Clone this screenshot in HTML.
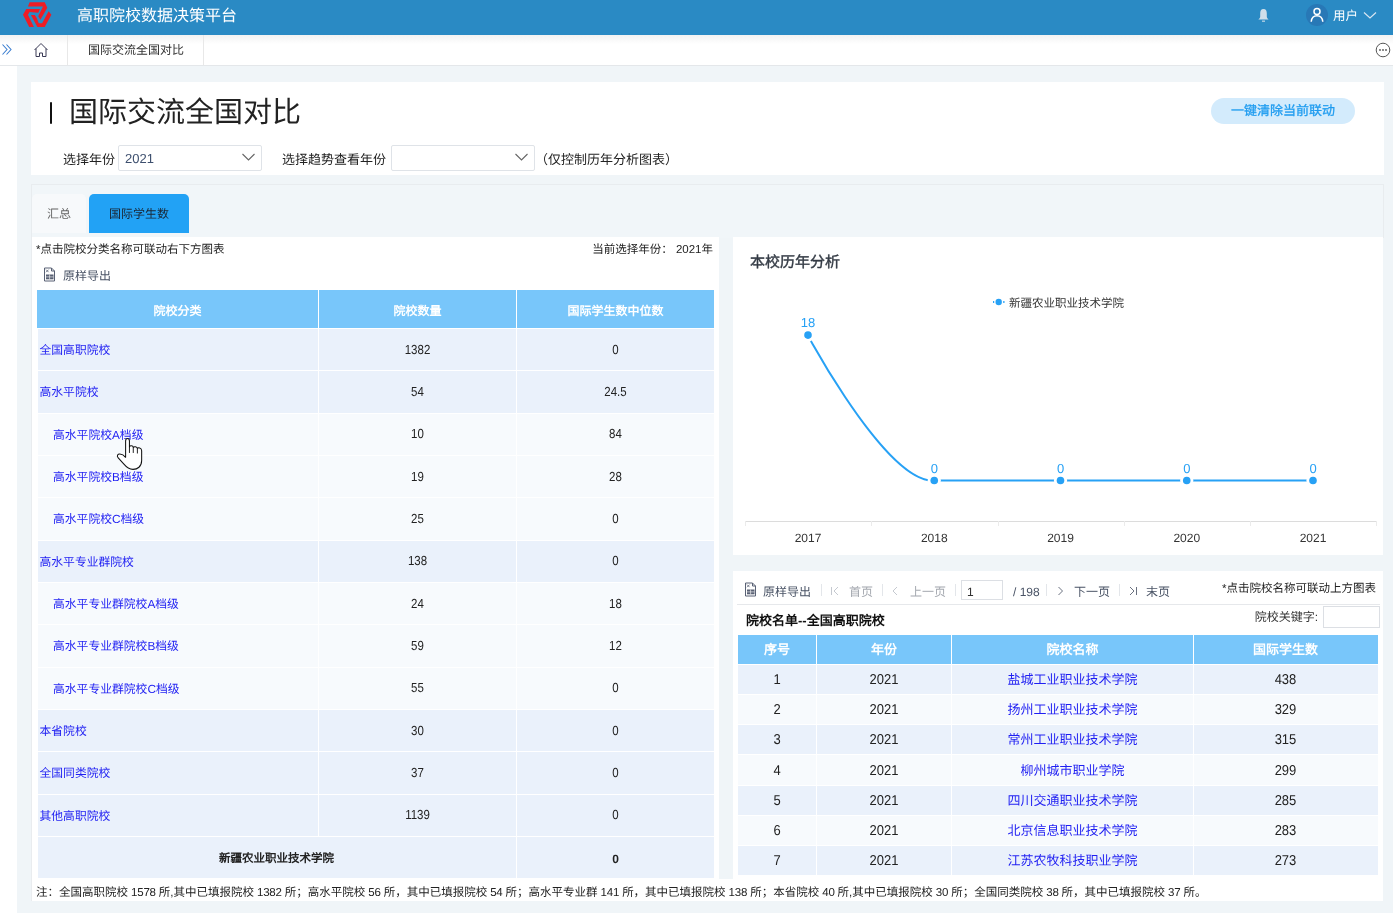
<!DOCTYPE html>
<html lang="zh-CN"><head><meta charset="utf-8">
<style>
*{box-sizing:border-box;margin:0;padding:0}
html,body{width:1393px;height:913px;overflow:hidden;background:#fff;font-family:"Liberation Sans",sans-serif;color:#222;text-rendering:geometricPrecision}
.abs{position:absolute}
.hdr{left:0;top:0;width:1393px;height:35px;background:#2a8ac4}
.ttl{left:77px;top:7px;font-size:16px;line-height:20px;color:#fff;white-space:nowrap}
.tabbar{left:0;top:35px;width:1393px;height:31px;background:#fff;border-bottom:1px solid #e4e7ea}
.shadow{left:0;top:35px;width:1393px;height:9px;background:linear-gradient(#f2f2f2,#fff)}
.sep{top:35px;width:1px;height:30px;background:#e8e8e8}
.bg{left:17px;top:66px;width:1376px;height:847px;background:#f0f5f8}
.panel{background:#fff}
.t{white-space:nowrap;line-height:1}
table{border-collapse:collapse;table-layout:fixed}
#root{position:absolute;left:0;top:0;width:1393px;height:913px;background:#fff;overflow:hidden;will-change:transform}
</style></head><body><div id="root">
<!-- header -->
<div class="abs hdr"></div>
<svg class="abs" style="left:15px;top:0" width="60" height="35" viewBox="0 0 1393 813">
<g fill="#ee1c25">
<polygon points="300,150 340,50 690,50 750,180 590,460 540,380 650,150"/>
<polygon points="580,210 260,210 185,345 330,630 440,630 300,345 340,280 540,295"/>
<polygon points="370,350 460,350 510,430 550,540 630,540 780,260 845,340 690,630 520,630"/>
</g></svg>
<div class="abs ttl">高职院校数据决策平台</div>
<!-- bell -->
<svg class="abs" style="left:1256px;top:7px" width="15" height="16" viewBox="0 0 15 16">
<path d="M7.5 2 C5 2 4.2 4 4.2 6.5 L4.2 9.5 C4.2 11 3.2 11.8 2.3 12.6 L12.7 12.6 C11.8 11.8 10.8 11 10.8 9.5 L10.8 6.5 C10.8 4 10 2 7.5 2Z" fill="#cfdeea"/>
<rect x="6" y="13.6" width="3" height="1.1" fill="#cfdeea"/>
</svg>
<div class="abs" style="left:1306px;top:4px;width:22px;height:22px;border-radius:50%;background:#2878b6"></div>
<svg class="abs" style="left:1306px;top:4px" width="22" height="22" viewBox="0 0 22 22">
<circle cx="11" cy="7.6" r="3" fill="none" stroke="#fff" stroke-width="1.5"/>
<path d="M5.2 17.8 C5.6 13.5 8 11.8 11 11.8 C14 11.8 16.4 13.5 16.8 17.8" fill="none" stroke="#fff" stroke-width="1.5"/>
</svg>
<div class="abs t" style="left:1333px;top:10px;font-size:12.5px;color:#fff">用户</div>
<svg class="abs" style="left:1363px;top:10px" width="14" height="10" viewBox="0 0 14 10">
<path d="M1 2.5 L7 8 L13 2.5" fill="none" stroke="#d8e6f2" stroke-width="1.2"/>
</svg>

<!-- tab bar -->
<div class="abs tabbar"></div>
<div class="abs shadow"></div>
<div class="abs sep" style="left:67px"></div>
<div class="abs sep" style="left:203px"></div>
<svg class="abs" style="left:1px;top:43px" width="13" height="13" viewBox="0 0 13 13">
<path d="M1.5 1.5 L6 6.5 L1.5 11.5 M5.5 1.5 L10 6.5 L5.5 11.5" fill="none" stroke="#3d7fd0" stroke-width="1.1"/>
</svg>
<svg class="abs" style="left:33px;top:42px" width="16" height="16" viewBox="0 0 16 16">
<path d="M1.5 8 L8 1.5 L14.5 8 M3 6.5 L3 14.5 L6.5 14.5 L6.5 11 L9.5 11 L9.5 14.5 L13 14.5 L13 6.5" fill="none" stroke="#3a3a55" stroke-width="1"/>
</svg>
<div class="abs t" style="left:88px;top:44px;font-size:12px;color:#333">国际交流全国对比</div>
<svg class="abs" style="left:1375px;top:42px" width="16" height="16" viewBox="0 0 16 16">
<circle cx="8" cy="8" r="6.8" fill="none" stroke="#555" stroke-width="1"/>
<circle cx="5" cy="8" r="0.9" fill="#555"/><circle cx="8" cy="8" r="0.9" fill="#555"/><circle cx="11" cy="8" r="0.9" fill="#555"/>
</svg>

<!-- content bg -->
<div class="abs bg"></div>

<!-- title panel -->
<div class="abs panel" style="left:31px;top:82px;width:1353px;height:93px"></div>
<div class="abs" style="left:49.8px;top:102.3px;width:2.4px;height:21.5px;border-radius:1.2px;background:#111"></div>
<div class="abs t" style="left:69px;top:99px;font-size:29px;color:#222">国际交流全国对比</div>
<div class="abs" style="left:1211px;top:98px;width:144px;height:26px;border-radius:13px;background:#d3ebfc"></div>
<div class="abs t" style="left:1211px;top:104px;width:144px;text-align:center;font-size:13px;color:#1f9cf0;-webkit-text-stroke:0.3px #1f9cf0">一键清除当前联动</div>

<div class="abs t" style="left:63px;top:153px;font-size:13px;color:#222">选择年份</div>
<div class="abs" style="left:118px;top:145px;width:144px;height:26px;border:1px solid #dfe3e8;border-radius:2px;background:#fff"></div>
<div class="abs t" style="left:125px;top:152px;font-size:13px;color:#3d4f6e">2021</div>
<svg class="abs" style="left:241px;top:152px" width="15" height="10" viewBox="0 0 15 10"><path d="M1.5 2 L7.5 8 L13.5 2" fill="none" stroke="#666" stroke-width="1.1"/></svg>
<div class="abs t" style="left:282px;top:153px;font-size:13px;color:#222">选择趋势查看年份</div>
<div class="abs" style="left:391px;top:145px;width:144px;height:26px;border:1px solid #dfe3e8;border-radius:2px;background:#fff"></div>
<svg class="abs" style="left:514px;top:152px" width="15" height="10" viewBox="0 0 15 10"><path d="M1.5 2 L7.5 8 L13.5 2" fill="none" stroke="#666" stroke-width="1.1"/></svg>
<div class="abs t" style="left:535px;top:153px;font-size:13px;color:#222">（仅控制历年分析图表）</div>

<!-- tabs -->
<div class="abs" style="left:31px;top:184px;width:1353px;height:54px;border:1px solid #e8ecef;border-bottom:none;background:#f1f6f9"></div>
<div class="abs" style="left:32px;top:194px;width:54px;height:39px;border-radius:5px 5px 0 0;background:#f7f9fb"></div>
<div class="abs t" style="left:32px;top:208px;width:54px;text-align:center;font-size:12px;color:#666">汇总</div>
<div class="abs" style="left:89px;top:194px;width:100px;height:39px;border-radius:5px 5px 0 0;background:#22a2f5"></div>
<div class="abs t" style="left:89px;top:208px;width:100px;text-align:center;font-size:12px;color:#1a2633">国际学生数</div>

<!-- left panel -->
<div class="abs panel" style="left:31px;top:237px;width:688px;height:642px;border-left:1px solid #e9ecef"></div>
<!-- right panels -->
<div class="abs panel" style="left:733px;top:237px;width:650px;height:318px"></div>
<div class="abs panel" style="left:733px;top:571px;width:650px;height:308px"></div>
<!-- note strip -->
<div class="abs panel" style="left:31px;top:879px;width:1352px;height:22px;border-left:1px solid #e9ecef"></div>

<!--LEFT-->
<div class="abs t" style="left:36px;top:244.5px;font-size:11.5px;color:#222">*点击院校分类名称可联动右下方图表</div>
<div class="abs t" style="left:520px;top:245px;width:193px;text-align:right;font-size:11.5px;color:#222">当前选择年份：&nbsp;2021年</div>
<svg class="abs" style="left:43px;top:267px" width="13" height="15" viewBox="0 0 13 15">
<path d="M1.5 1 L8.5 1 L11.5 4 L11.5 14 L1.5 14 Z" fill="#fff" stroke="#596174" stroke-width="1"/>
<path d="M8.5 1 L8.5 4 L11.5 4" fill="none" stroke="#596174" stroke-width="1"/>
<path d="M3 2.6 L5.6 5.2 M5.6 2.6 L3 5.2" stroke="#596174" stroke-width="0.8"/>
<rect x="3" y="7.5" width="7.5" height="4.8" fill="#596174"/>
<path d="M3 9.9 H10.5 M6.6 7.5 V12.3" stroke="#fff" stroke-width="0.6"/>
</svg>
<div class="abs t" style="left:63px;top:270px;font-size:12px;color:#4a5466">原样导出</div>
<div class="abs" style="left:37px;top:290px;width:677px;height:38px;background:#78c6fa"></div>
<div class="abs t" style="left:37px;top:304.5px;width:281px;text-align:center;font-size:12px;font-weight:bold;color:#fff">院校分类</div>
<div class="abs t" style="left:319px;top:304.5px;width:197px;text-align:center;font-size:12px;font-weight:bold;color:#fff">院校数量</div>
<div class="abs t" style="left:517px;top:304.5px;width:197px;text-align:center;font-size:12px;font-weight:bold;color:#fff">国际学生数中位数</div>
<div class="abs" style="left:38px;top:329.00px;width:676px;height:41.33px;background:#eaf1fb"></div>
<div class="abs t" style="left:39.5px;top:344.87px;font-size:11.8px;color:#1f1ff2">全国高职院校</div>
<div class="abs t" style="left:319px;top:345.67px;width:197px;text-align:center;font-size:11.5px;color:#222;transform:scaleY(1.14);transform-origin:50% 90%">1382</div>
<div class="abs t" style="left:517px;top:345.67px;width:197px;text-align:center;font-size:11.5px;color:#222;transform:scaleY(1.14);transform-origin:50% 90%">0</div>
<div class="abs" style="left:38px;top:371.33px;width:676px;height:41.33px;background:#eaf1fb"></div>
<div class="abs t" style="left:39.5px;top:387.20px;font-size:11.8px;color:#1f1ff2">高水平院校</div>
<div class="abs t" style="left:319px;top:388.00px;width:197px;text-align:center;font-size:11.5px;color:#222;transform:scaleY(1.14);transform-origin:50% 90%">54</div>
<div class="abs t" style="left:517px;top:388.00px;width:197px;text-align:center;font-size:11.5px;color:#222;transform:scaleY(1.14);transform-origin:50% 90%">24.5</div>
<div class="abs" style="left:38px;top:413.67px;width:676px;height:41.33px;background:#f7fafd"></div>
<div class="abs t" style="left:53px;top:429.53px;font-size:11.8px;color:#1f1ff2">高水平院校A档级</div>
<div class="abs t" style="left:319px;top:430.33px;width:197px;text-align:center;font-size:11.5px;color:#222;transform:scaleY(1.14);transform-origin:50% 90%">10</div>
<div class="abs t" style="left:517px;top:430.33px;width:197px;text-align:center;font-size:11.5px;color:#222;transform:scaleY(1.14);transform-origin:50% 90%">84</div>
<div class="abs" style="left:38px;top:456.00px;width:676px;height:41.33px;background:#f7fafd"></div>
<div class="abs t" style="left:53px;top:471.87px;font-size:11.8px;color:#1f1ff2">高水平院校B档级</div>
<div class="abs t" style="left:319px;top:472.67px;width:197px;text-align:center;font-size:11.5px;color:#222;transform:scaleY(1.14);transform-origin:50% 90%">19</div>
<div class="abs t" style="left:517px;top:472.67px;width:197px;text-align:center;font-size:11.5px;color:#222;transform:scaleY(1.14);transform-origin:50% 90%">28</div>
<div class="abs" style="left:38px;top:498.33px;width:676px;height:41.33px;background:#f7fafd"></div>
<div class="abs t" style="left:53px;top:514.20px;font-size:11.8px;color:#1f1ff2">高水平院校C档级</div>
<div class="abs t" style="left:319px;top:515.00px;width:197px;text-align:center;font-size:11.5px;color:#222;transform:scaleY(1.14);transform-origin:50% 90%">25</div>
<div class="abs t" style="left:517px;top:515.00px;width:197px;text-align:center;font-size:11.5px;color:#222;transform:scaleY(1.14);transform-origin:50% 90%">0</div>
<div class="abs" style="left:38px;top:540.67px;width:676px;height:41.33px;background:#eaf1fb"></div>
<div class="abs t" style="left:39.5px;top:556.53px;font-size:11.8px;color:#1f1ff2">高水平专业群院校</div>
<div class="abs t" style="left:319px;top:557.33px;width:197px;text-align:center;font-size:11.5px;color:#222;transform:scaleY(1.14);transform-origin:50% 90%">138</div>
<div class="abs t" style="left:517px;top:557.33px;width:197px;text-align:center;font-size:11.5px;color:#222;transform:scaleY(1.14);transform-origin:50% 90%">0</div>
<div class="abs" style="left:38px;top:583.00px;width:676px;height:41.33px;background:#f7fafd"></div>
<div class="abs t" style="left:53px;top:598.87px;font-size:11.8px;color:#1f1ff2">高水平专业群院校A档级</div>
<div class="abs t" style="left:319px;top:599.67px;width:197px;text-align:center;font-size:11.5px;color:#222;transform:scaleY(1.14);transform-origin:50% 90%">24</div>
<div class="abs t" style="left:517px;top:599.67px;width:197px;text-align:center;font-size:11.5px;color:#222;transform:scaleY(1.14);transform-origin:50% 90%">18</div>
<div class="abs" style="left:38px;top:625.33px;width:676px;height:41.33px;background:#f7fafd"></div>
<div class="abs t" style="left:53px;top:641.20px;font-size:11.8px;color:#1f1ff2">高水平专业群院校B档级</div>
<div class="abs t" style="left:319px;top:642.00px;width:197px;text-align:center;font-size:11.5px;color:#222;transform:scaleY(1.14);transform-origin:50% 90%">59</div>
<div class="abs t" style="left:517px;top:642.00px;width:197px;text-align:center;font-size:11.5px;color:#222;transform:scaleY(1.14);transform-origin:50% 90%">12</div>
<div class="abs" style="left:38px;top:667.67px;width:676px;height:41.33px;background:#f7fafd"></div>
<div class="abs t" style="left:53px;top:683.53px;font-size:11.8px;color:#1f1ff2">高水平专业群院校C档级</div>
<div class="abs t" style="left:319px;top:684.33px;width:197px;text-align:center;font-size:11.5px;color:#222;transform:scaleY(1.14);transform-origin:50% 90%">55</div>
<div class="abs t" style="left:517px;top:684.33px;width:197px;text-align:center;font-size:11.5px;color:#222;transform:scaleY(1.14);transform-origin:50% 90%">0</div>
<div class="abs" style="left:38px;top:710.00px;width:676px;height:41.33px;background:#eaf1fb"></div>
<div class="abs t" style="left:39.5px;top:725.87px;font-size:11.8px;color:#1f1ff2">本省院校</div>
<div class="abs t" style="left:319px;top:726.67px;width:197px;text-align:center;font-size:11.5px;color:#222;transform:scaleY(1.14);transform-origin:50% 90%">30</div>
<div class="abs t" style="left:517px;top:726.67px;width:197px;text-align:center;font-size:11.5px;color:#222;transform:scaleY(1.14);transform-origin:50% 90%">0</div>
<div class="abs" style="left:38px;top:752.33px;width:676px;height:41.33px;background:#eaf1fb"></div>
<div class="abs t" style="left:39.5px;top:768.20px;font-size:11.8px;color:#1f1ff2">全国同类院校</div>
<div class="abs t" style="left:319px;top:769.00px;width:197px;text-align:center;font-size:11.5px;color:#222;transform:scaleY(1.14);transform-origin:50% 90%">37</div>
<div class="abs t" style="left:517px;top:769.00px;width:197px;text-align:center;font-size:11.5px;color:#222;transform:scaleY(1.14);transform-origin:50% 90%">0</div>
<div class="abs" style="left:38px;top:794.67px;width:676px;height:41.33px;background:#eaf1fb"></div>
<div class="abs t" style="left:39.5px;top:810.53px;font-size:11.8px;color:#1f1ff2">其他高职院校</div>
<div class="abs t" style="left:319px;top:811.33px;width:197px;text-align:center;font-size:11.5px;color:#222;transform:scaleY(1.14);transform-origin:50% 90%">1139</div>
<div class="abs t" style="left:517px;top:811.33px;width:197px;text-align:center;font-size:11.5px;color:#222;transform:scaleY(1.14);transform-origin:50% 90%">0</div>
<div class="abs" style="left:38px;top:837.00px;width:676px;height:41.33px;background:#eaf1fb"></div>
<div class="abs" style="left:516px;top:837.00px;width:1px;height:41.33px;background:#fff"></div>
<div class="abs t" style="left:37px;top:853.67px;width:479px;text-align:center;font-size:11.5px;font-weight:bold;color:#222">新疆农业职业技术学院</div>
<div class="abs t" style="left:517px;top:852.67px;width:197px;text-align:center;font-size:12px;font-weight:bold;color:#222">0</div>
<div class="abs" style="left:318px;top:290px;width:1px;height:546px;background:#fff"></div>
<div class="abs" style="left:516px;top:290px;width:1px;height:588px;background:#fff"></div>
<!--CHART-->
<svg class="abs" style="left:733px;top:237px" width="650" height="318" viewBox="733 237 650 318">
<line x1="745" y1="521.5" x2="1376" y2="521.5" stroke="#dcdcdc" stroke-width="1"/>
<line x1="745.5" y1="521" x2="745.5" y2="526" stroke="#ebebeb" stroke-width="1"/>
<line x1="871.5" y1="521" x2="871.5" y2="526" stroke="#ebebeb" stroke-width="1"/>
<line x1="998.5" y1="521" x2="998.5" y2="526" stroke="#ebebeb" stroke-width="1"/>
<line x1="1124.5" y1="521" x2="1124.5" y2="526" stroke="#ebebeb" stroke-width="1"/>
<line x1="1250.5" y1="521" x2="1250.5" y2="526" stroke="#ebebeb" stroke-width="1"/>
<line x1="1376.5" y1="521" x2="1376.5" y2="526" stroke="#ebebeb" stroke-width="1"/>
<path d="M808.00,335.10 C789.6,301.5 882.8,484.8 934.25,480.50 L1313.00,480.50" fill="none" stroke="#27a1f5" stroke-width="2"/>
<circle cx="808" cy="335.1" r="6.6" fill="#fff"/><circle cx="808" cy="335.1" r="3.8" fill="#27a1f5"/>
<circle cx="934.25" cy="480.5" r="6.6" fill="#fff"/><circle cx="934.25" cy="480.5" r="3.8" fill="#27a1f5"/>
<circle cx="1060.5" cy="480.5" r="6.6" fill="#fff"/><circle cx="1060.5" cy="480.5" r="3.8" fill="#27a1f5"/>
<circle cx="1186.75" cy="480.5" r="6.6" fill="#fff"/><circle cx="1186.75" cy="480.5" r="3.8" fill="#27a1f5"/>
<circle cx="1313" cy="480.5" r="6.6" fill="#fff"/><circle cx="1313" cy="480.5" r="3.8" fill="#27a1f5"/>
<text x="808" y="327.40000000000003" text-anchor="middle" font-size="13" fill="#27a1f5" font-family="Liberation Sans, sans-serif">18</text>
<text x="934.25" y="472.8" text-anchor="middle" font-size="13" fill="#27a1f5" font-family="Liberation Sans, sans-serif">0</text>
<text x="1060.5" y="472.8" text-anchor="middle" font-size="13" fill="#27a1f5" font-family="Liberation Sans, sans-serif">0</text>
<text x="1186.75" y="472.8" text-anchor="middle" font-size="13" fill="#27a1f5" font-family="Liberation Sans, sans-serif">0</text>
<text x="1313" y="472.8" text-anchor="middle" font-size="13" fill="#27a1f5" font-family="Liberation Sans, sans-serif">0</text>
<text x="808" y="542" text-anchor="middle" font-size="12" fill="#333" font-family="Liberation Sans, sans-serif">2017</text>
<text x="934.25" y="542" text-anchor="middle" font-size="12" fill="#333" font-family="Liberation Sans, sans-serif">2018</text>
<text x="1060.5" y="542" text-anchor="middle" font-size="12" fill="#333" font-family="Liberation Sans, sans-serif">2019</text>
<text x="1186.75" y="542" text-anchor="middle" font-size="12" fill="#333" font-family="Liberation Sans, sans-serif">2020</text>
<text x="1313" y="542" text-anchor="middle" font-size="12" fill="#333" font-family="Liberation Sans, sans-serif">2021</text>
<line x1="993" y1="302" x2="1004.5" y2="302" stroke="#27a1f5" stroke-width="2"/><circle cx="998.7" cy="302" r="4.6" fill="#fff"/><circle cx="998.7" cy="302" r="3.2" fill="#27a1f5"/>
</svg>
<div class="abs t" style="left:750px;top:255px;font-size:15px;-webkit-text-stroke:0.4px #333a44;color:#333a44">本校历年分析</div>
<div class="abs t" style="left:1009px;top:298.5px;font-size:11.5px;color:#333">新疆农业职业技术学院</div>
<!--RTABLE-->
<svg class="abs" style="left:744px;top:582px" width="13" height="15" viewBox="0 0 13 15">
<path d="M1.5 1 L8.5 1 L11.5 4 L11.5 14 L1.5 14 Z" fill="#fff" stroke="#596174" stroke-width="1"/>
<path d="M8.5 1 L8.5 4 L11.5 4" fill="none" stroke="#596174" stroke-width="1"/>
<path d="M3 2.6 L5.6 5.2 M5.6 2.6 L3 5.2" stroke="#596174" stroke-width="0.8"/>
<rect x="3" y="7.5" width="7.5" height="4.8" fill="#596174"/>
<path d="M3 9.9 H10.5 M6.6 7.5 V12.3" stroke="#fff" stroke-width="0.6"/>
</svg>
<div class="abs t" style="left:763px;top:585.5px;font-size:12px;color:#4a5466">原样导出</div>
<div class="abs" style="left:821px;top:584px;width:1px;height:12px;background:#e3e6ea"></div>
<div class="abs" style="left:882px;top:584px;width:1px;height:12px;background:#e3e6ea"></div>
<div class="abs" style="left:955px;top:584px;width:1px;height:12px;background:#e3e6ea"></div>
<div class="abs" style="left:1046px;top:584px;width:1px;height:12px;background:#e3e6ea"></div>
<div class="abs" style="left:1119px;top:584px;width:1px;height:12px;background:#e3e6ea"></div>
<svg class="abs" style="left:829px;top:585.5px" width="12" height="10" viewBox="0 0 12 10"><path d="M2.5 1 L2.5 9 M9 1 L5 5 L9 9" fill="none" stroke="#c5c9d0" stroke-width="1"/></svg>
<div class="abs t" style="left:849px;top:585.5px;font-size:12px;color:#a5a9b0">首页</div>
<svg class="abs" style="left:890px;top:585.5px" width="10" height="10" viewBox="0 0 10 10"><path d="M7 1 L3 5 L7 9" fill="none" stroke="#c5c9d0" stroke-width="1"/></svg>
<div class="abs t" style="left:910px;top:585.5px;font-size:12px;color:#a5a9b0">上一页</div>
<div class="abs" style="left:961px;top:580px;width:42px;height:20px;border:1px solid #dcdfe4;background:#fff"></div>
<div class="abs t" style="left:967px;top:585.5px;font-size:12px;color:#333">1</div>
<div class="abs t" style="left:1013px;top:585.5px;font-size:12px;color:#4a5466">/ 198</div>
<svg class="abs" style="left:1055px;top:585.5px" width="10" height="10" viewBox="0 0 10 10"><path d="M3.5 1 L7.5 5 L3.5 9" fill="none" stroke="#6a7180" stroke-width="1"/></svg>
<div class="abs t" style="left:1074px;top:585.5px;font-size:12px;color:#4a5466">下一页</div>
<svg class="abs" style="left:1127px;top:585.5px" width="12" height="10" viewBox="0 0 12 10"><path d="M3 1 L7 5 L3 9 M9.5 1 L9.5 9" fill="none" stroke="#6a7180" stroke-width="1"/></svg>
<div class="abs t" style="left:1146px;top:585.5px;font-size:12px;color:#4a5466">末页</div>
<div class="abs t" style="left:1180px;top:583.5px;width:196px;text-align:right;font-size:11.5px;color:#222">*点击院校名称可联动上方图表</div>
<div class="abs" style="left:737px;top:604px;width:643px;height:1px;background:#e6e8eb"></div>
<div class="abs t" style="left:746px;top:614px;font-size:13px;font-weight:bold;color:#111">院校名单--全国高职院校</div>
<div class="abs t" style="left:1200px;top:611px;width:118px;text-align:right;font-size:12px;color:#333">院校关键字:</div>
<div class="abs" style="left:1323px;top:606px;width:57px;height:22px;border:1px solid #dcdfe4;background:#fff"></div>
<div class="abs" style="left:738px;top:635px;width:640px;height:29px;background:#78c6fa"></div>
<div class="abs t" style="left:738px;top:642.5px;width:78px;text-align:center;font-size:13px;font-weight:bold;color:#fff">序号</div>
<div class="abs t" style="left:817px;top:642.5px;width:134px;text-align:center;font-size:13px;font-weight:bold;color:#fff">年份</div>
<div class="abs t" style="left:952px;top:642.5px;width:241px;text-align:center;font-size:13px;font-weight:bold;color:#fff">院校名称</div>
<div class="abs t" style="left:1194px;top:642.5px;width:183px;text-align:center;font-size:13px;font-weight:bold;color:#fff">国际学生数</div>
<div class="abs" style="left:738px;top:665.00px;width:640px;height:29.14px;background:#eaf1fb"></div>
<div class="abs t" style="left:738px;top:673.07px;width:78px;text-align:center;font-size:13px;color:#222;transform:scaleY(1.1);transform-origin:50% 90%">1</div>
<div class="abs t" style="left:817px;top:673.07px;width:134px;text-align:center;font-size:13px;color:#222;transform:scaleY(1.1);transform-origin:50% 90%">2021</div>
<div class="abs t" style="left:952px;top:673.07px;width:241px;text-align:center;font-size:13px;color:#1f1ff2">盐城工业职业技术学院</div>
<div class="abs t" style="left:1194px;top:673.07px;width:183px;text-align:center;font-size:13px;color:#222;transform:scaleY(1.1);transform-origin:50% 90%">438</div>
<div class="abs" style="left:738px;top:695.14px;width:640px;height:29.14px;background:#f7fafd"></div>
<div class="abs t" style="left:738px;top:703.21px;width:78px;text-align:center;font-size:13px;color:#222;transform:scaleY(1.1);transform-origin:50% 90%">2</div>
<div class="abs t" style="left:817px;top:703.21px;width:134px;text-align:center;font-size:13px;color:#222;transform:scaleY(1.1);transform-origin:50% 90%">2021</div>
<div class="abs t" style="left:952px;top:703.21px;width:241px;text-align:center;font-size:13px;color:#1f1ff2">扬州工业职业技术学院</div>
<div class="abs t" style="left:1194px;top:703.21px;width:183px;text-align:center;font-size:13px;color:#222;transform:scaleY(1.1);transform-origin:50% 90%">329</div>
<div class="abs" style="left:738px;top:725.29px;width:640px;height:29.14px;background:#eaf1fb"></div>
<div class="abs t" style="left:738px;top:733.36px;width:78px;text-align:center;font-size:13px;color:#222;transform:scaleY(1.1);transform-origin:50% 90%">3</div>
<div class="abs t" style="left:817px;top:733.36px;width:134px;text-align:center;font-size:13px;color:#222;transform:scaleY(1.1);transform-origin:50% 90%">2021</div>
<div class="abs t" style="left:952px;top:733.36px;width:241px;text-align:center;font-size:13px;color:#1f1ff2">常州工业职业技术学院</div>
<div class="abs t" style="left:1194px;top:733.36px;width:183px;text-align:center;font-size:13px;color:#222;transform:scaleY(1.1);transform-origin:50% 90%">315</div>
<div class="abs" style="left:738px;top:755.43px;width:640px;height:29.14px;background:#f7fafd"></div>
<div class="abs t" style="left:738px;top:763.50px;width:78px;text-align:center;font-size:13px;color:#222;transform:scaleY(1.1);transform-origin:50% 90%">4</div>
<div class="abs t" style="left:817px;top:763.50px;width:134px;text-align:center;font-size:13px;color:#222;transform:scaleY(1.1);transform-origin:50% 90%">2021</div>
<div class="abs t" style="left:952px;top:763.50px;width:241px;text-align:center;font-size:13px;color:#1f1ff2">柳州城市职业学院</div>
<div class="abs t" style="left:1194px;top:763.50px;width:183px;text-align:center;font-size:13px;color:#222;transform:scaleY(1.1);transform-origin:50% 90%">299</div>
<div class="abs" style="left:738px;top:785.57px;width:640px;height:29.14px;background:#eaf1fb"></div>
<div class="abs t" style="left:738px;top:793.64px;width:78px;text-align:center;font-size:13px;color:#222;transform:scaleY(1.1);transform-origin:50% 90%">5</div>
<div class="abs t" style="left:817px;top:793.64px;width:134px;text-align:center;font-size:13px;color:#222;transform:scaleY(1.1);transform-origin:50% 90%">2021</div>
<div class="abs t" style="left:952px;top:793.64px;width:241px;text-align:center;font-size:13px;color:#1f1ff2">四川交通职业技术学院</div>
<div class="abs t" style="left:1194px;top:793.64px;width:183px;text-align:center;font-size:13px;color:#222;transform:scaleY(1.1);transform-origin:50% 90%">285</div>
<div class="abs" style="left:738px;top:815.71px;width:640px;height:29.14px;background:#f7fafd"></div>
<div class="abs t" style="left:738px;top:823.79px;width:78px;text-align:center;font-size:13px;color:#222;transform:scaleY(1.1);transform-origin:50% 90%">6</div>
<div class="abs t" style="left:817px;top:823.79px;width:134px;text-align:center;font-size:13px;color:#222;transform:scaleY(1.1);transform-origin:50% 90%">2021</div>
<div class="abs t" style="left:952px;top:823.79px;width:241px;text-align:center;font-size:13px;color:#1f1ff2">北京信息职业技术学院</div>
<div class="abs t" style="left:1194px;top:823.79px;width:183px;text-align:center;font-size:13px;color:#222;transform:scaleY(1.1);transform-origin:50% 90%">283</div>
<div class="abs" style="left:738px;top:845.86px;width:640px;height:29.14px;background:#eaf1fb"></div>
<div class="abs t" style="left:738px;top:853.93px;width:78px;text-align:center;font-size:13px;color:#222;transform:scaleY(1.1);transform-origin:50% 90%">7</div>
<div class="abs t" style="left:817px;top:853.93px;width:134px;text-align:center;font-size:13px;color:#222;transform:scaleY(1.1);transform-origin:50% 90%">2021</div>
<div class="abs t" style="left:952px;top:853.93px;width:241px;text-align:center;font-size:13px;color:#1f1ff2">江苏农牧科技职业学院</div>
<div class="abs t" style="left:1194px;top:853.93px;width:183px;text-align:center;font-size:13px;color:#222;transform:scaleY(1.1);transform-origin:50% 90%">273</div>
<div class="abs" style="left:816px;top:635px;width:1px;height:240px;background:#fff"></div>
<div class="abs" style="left:951px;top:635px;width:1px;height:240px;background:#fff"></div>
<div class="abs" style="left:1193px;top:635px;width:1px;height:240px;background:#fff"></div>
<!--NOTE-->
<div class="abs t" style="left:36px;top:888px;font-size:11.5px;color:#222">注：全国高职院校<span style="letter-spacing:-0.2px"> 1578 </span>所,其中已填报院校<span style="letter-spacing:-0.2px"> 1382 </span>所；高水平院校<span style="letter-spacing:-0.2px"> 56 </span>所，其中已填报院校<span style="letter-spacing:-0.2px"> 54 </span>所；高水平专业群<span style="letter-spacing:-0.2px"> 141 </span>所，其中已填报院校<span style="letter-spacing:-0.2px"> 138 </span>所；本省院校<span style="letter-spacing:-0.2px"> 40 </span>所,其中已填报院校<span style="letter-spacing:-0.2px"> 30 </span>所；全国同类院校<span style="letter-spacing:-0.2px"> 38 </span>所，其中已填报院校<span style="letter-spacing:-0.2px"> 37 </span>所。</div>

<!-- cursor -->
<svg class="abs" style="left:110px;top:425px" width="50" height="50" viewBox="0 0 913 913">
<path d="M285,590 L285,290 C285,230 355,230 355,290 L355,400 C362,372 418,372 425,410 C435,388 495,390 500,430 C510,408 578,412 578,470 L578,650 C578,760 500,810 420,810 C340,810 300,770 250,710 L150,600 C118,565 138,528 180,530 C220,532 260,560 285,590 Z" fill="#fff" stroke="#111" stroke-width="19" stroke-linejoin="round"/>
<path d="M355,400 L355,510 M425,410 L425,510 M500,430 L500,520" fill="none" stroke="#111" stroke-width="17"/>
</svg>
</div></body></html>
